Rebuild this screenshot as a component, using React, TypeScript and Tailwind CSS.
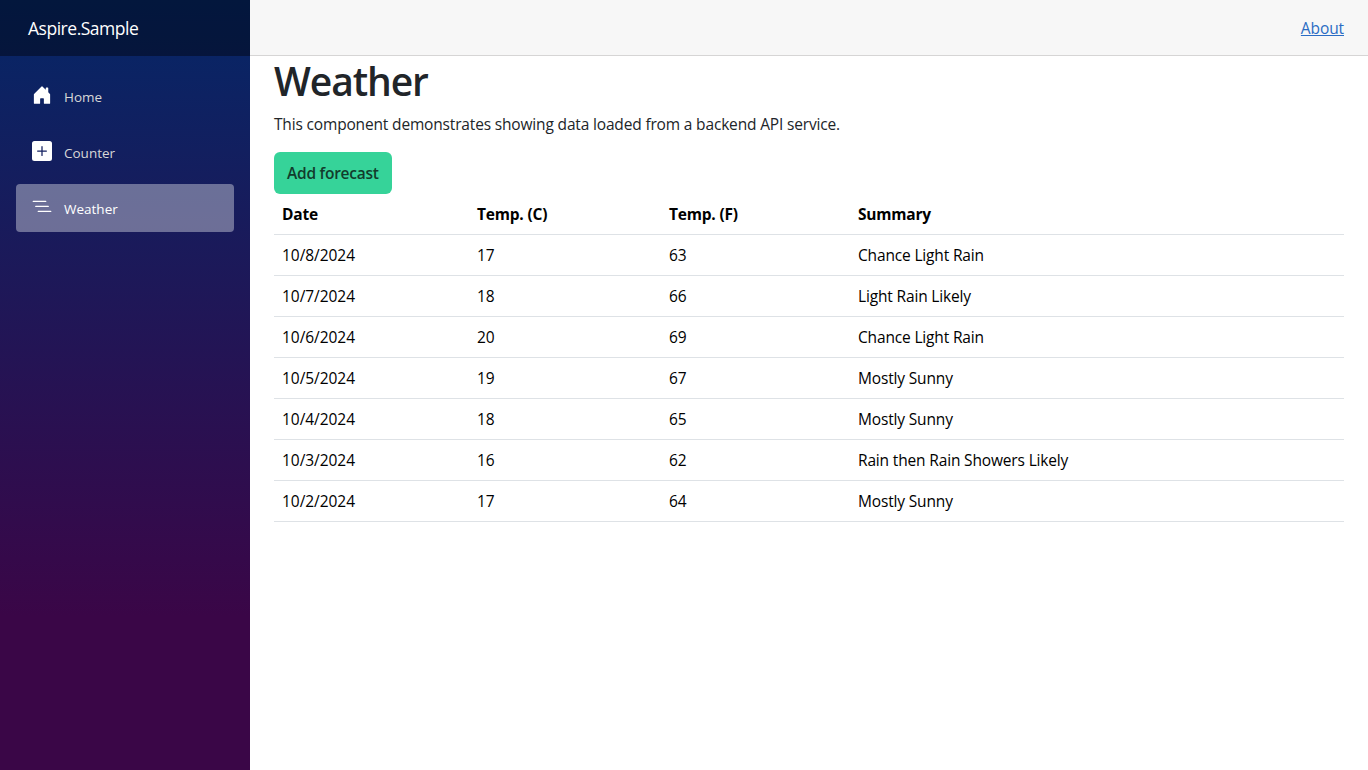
const forecasts = [
  { date: "10/8/2024", c: 17, f: 63, summary: "Chance Light Rain" },
  { date: "10/7/2024", c: 18, f: 66, summary: "Light Rain Likely" },
  { date: "10/6/2024", c: 20, f: 69, summary: "Chance Light Rain" },
  { date: "10/5/2024", c: 19, f: 67, summary: "Mostly Sunny" },
  { date: "10/4/2024", c: 18, f: 65, summary: "Mostly Sunny" },
  { date: "10/3/2024", c: 16, f: 62, summary: "Rain then Rain Showers Likely" },
  { date: "10/2/2024", c: 17, f: 64, summary: "Mostly Sunny" },
];

const navItems = [
  {
    label: "Home",
    active: false,
    path: "M6.5 14.5v-3.505c0-.245.25-.495.5-.495h2c.25 0 .5.25.5.5v3.5a.5.5 0 0 0 .5.5h4a.5.5 0 0 0 .5-.5v-7a.5.5 0 0 0-.146-.354L13 5.793V2.5a.5.5 0 0 0-.5-.5h-1a.5.5 0 0 0-.5.5v1.293L8.354 1.146a.5.5 0 0 0-.708 0l-6 6A.5.5 0 0 0 1.5 7.5v7a.5.5 0 0 0 .5.5h4a.5.5 0 0 0 .5-.5Z",
  },
  {
    label: "Counter",
    active: false,
    path: "M2 0a2 2 0 0 0-2 2v12a2 2 0 0 0 2 2h12a2 2 0 0 0 2-2V2a2 2 0 0 0-2-2H2zm6.5 4.5v3h3a.5.5 0 0 1 0 1h-3v3a.5.5 0 0 1-1 0v-3h-3a.5.5 0 0 1 0-1h3v-3a.5.5 0 0 1 1 0z",
  },
  {
    label: "Weather",
    active: true,
    path: "M4.5 11.5A.5.5 0 0 1 5 11h10a.5.5 0 0 1 0 1H5a.5.5 0 0 1-.5-.5zm-2-4A.5.5 0 0 1 3 7h10a.5.5 0 0 1 0 1H3a.5.5 0 0 1-.5-.5zm-2-4A.5.5 0 0 1 1 3h10a.5.5 0 0 1 0 1H1a.5.5 0 0 1-.5-.5z",
  },
];

function Sidebar() {
  return (
    <aside className="flex w-[250px] shrink-0 flex-col bg-[linear-gradient(180deg,rgb(5,39,103)_0%,#3a0647_80%)]">
      <div className="flex h-14 items-center bg-black/40 pl-7">
        <a href="#" className="text-[17.5px] leading-[30px] tracking-[-0.48px] text-white">Aspire.Sample</a>
      </div>
      <nav className="flex flex-col gap-2 px-4 pt-4">
        {navItems.map((item) => (
          <a
            key={item.label}
            href="#"
            className={
              item.active
                ? "flex h-12 items-center gap-3 rounded bg-white/[0.37] px-4 text-white"
                : "flex h-12 items-center gap-3 rounded px-4 text-[#d7d7d7]"
            }
          >
            <svg viewBox="0 0 16 16" className="mb-[2px] size-5 fill-white">
              <path d={item.path} />
            </svg>
            <span className="pt-[2px] text-[13.5px] leading-5">{item.label}</span>
          </a>
        ))}
      </nav>
    </aside>
  );
}

export default function App() {
  return (
    <div className="flex h-[770px] w-[1368px] overflow-hidden bg-white font-['Open_Sans','Noto_Sans',sans-serif] text-[15.5px] leading-6 text-[#212529]">
      <Sidebar />
      <main className="flex flex-1 flex-col">
        <header className="flex h-14 items-center justify-end border-b border-[#d6d5d5] bg-[#f7f7f7] pr-6">
          <a href="#" className="tracking-[-0.1px] text-[#2a6cc4] underline">About</a>
        </header>
        <article className="flex flex-col items-start px-6">
          <h1 className="mt-px h-12 text-[39px] leading-12 font-semibold tracking-[-1.1px]">Weather</h1>
          <p className="mt-[7px] tracking-[-0.165px]">This component demonstrates showing data loaded from a backend API service.</p>
          <button className="mt-[16px] h-[42px] rounded-md bg-[#36d399] px-[13px] font-semibold tracking-[-0.25px] text-[#123c2c]">
            Add forecast
          </button>
          <table className="w-full table-fixed border-separate border-spacing-0 text-left text-black [&_td]:border-b [&_td]:border-[#dee2e6] [&_td]:px-2 [&_td]:py-0 [&_th]:border-b [&_th]:border-[#dee2e6] [&_th]:px-2 [&_th]:py-0">
            <colgroup>
              <col className="w-[195px]" />
              <col className="w-[192px]" />
              <col className="w-[189px]" />
              <col />
            </colgroup>
            <thead>
              <tr className="h-[41px] tracking-[-0.2px]">
                <th className="font-bold">Date</th>
                <th className="font-bold">Temp. (C)</th>
                <th className="font-bold">Temp. (F)</th>
                <th className="font-bold">Summary</th>
              </tr>
            </thead>
            <tbody>
              {forecasts.map((row) => (
                <tr key={row.date} className="h-[41px]">
                  <td className="tracking-[-0.05px]">{row.date}</td>
                  <td>{row.c}</td>
                  <td>{row.f}</td>
                  <td className="tracking-[-0.16px]">{row.summary}</td>
                </tr>
              ))}
            </tbody>
          </table>
        </article>
      </main>
    </div>
  );
}
